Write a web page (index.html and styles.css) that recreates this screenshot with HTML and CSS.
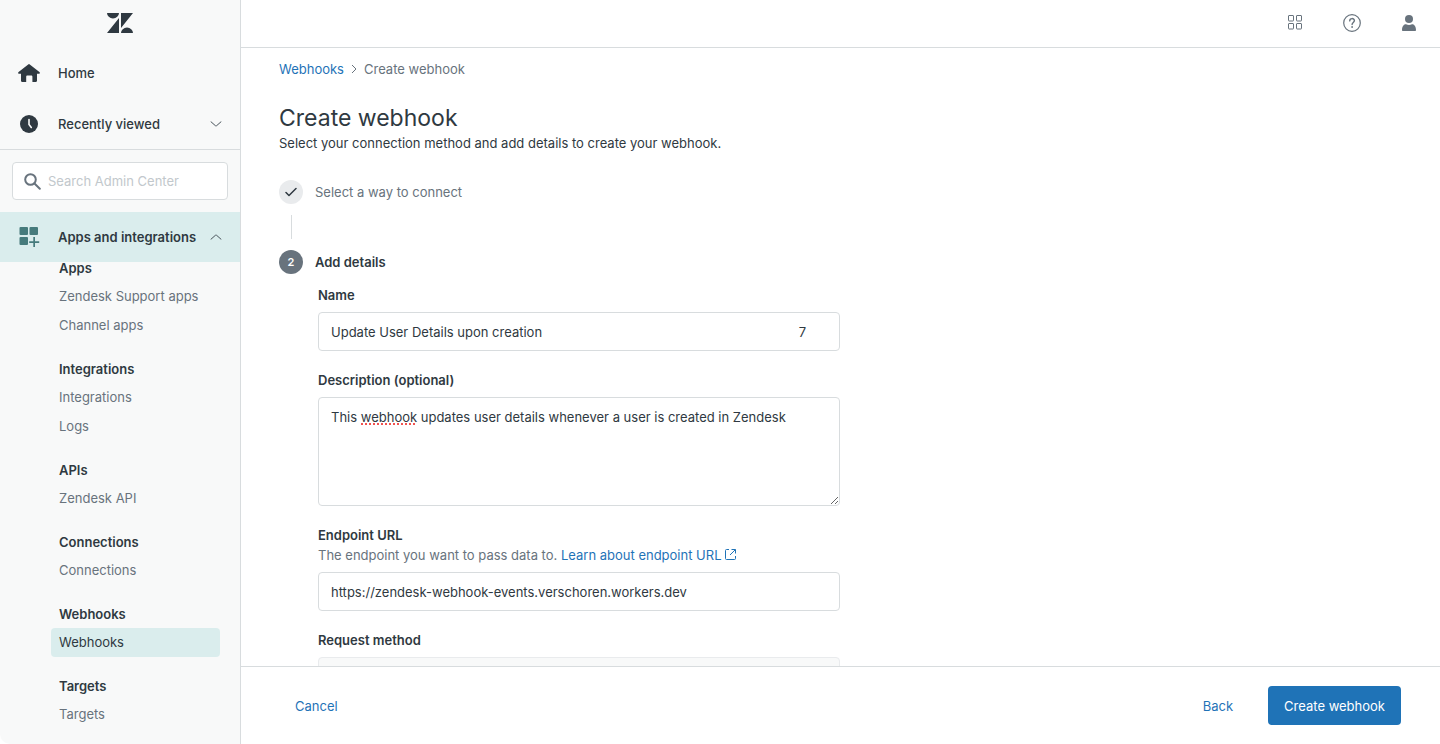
FILE: index.html
```html
<!DOCTYPE html>
<html lang="en">
<head>
    <meta charset="UTF-8">
    <meta name="viewport" content="width=device-width, initial-scale=1.0">
    <title>Create webhook</title>
    <link rel="stylesheet" href="styles.css">
</head>
<body>
    <div class="app">
        <aside class="sidebar">
            <div class="logo">
                <svg width="26" height="20" viewBox="0 0 26 20" fill="currentColor">
                    <path d="M0 0h12a6 5.4 0 0 1-12 0zM12 5v15H0zM14 0h12L14 15zM14 20a6 5.4 0 0 1 12 0z"/>
                </svg>
            </div>
            <a class="side-row" href="#">
                <svg class="side-icon" width="22" height="18" viewBox="0 0 22 18" fill="currentColor">
                    <path d="M10.2.4a1.2 1.2 0 0 1 1.6 0l9.6 7.7c.9.8.5 1.7-.6 1.7H19v7c0 .7-.4 1.1-1.1 1.1h-3.5v-5.2c0-.8-.5-1.3-1.3-1.3H9.5c-.8 0-1.3.5-1.3 1.3v5.2H4.1c-.7 0-1.1-.4-1.1-1.1v-7H1.2C.1 9.8-.3 8.9.6 8.1z"/>
                </svg>
                <span>Home</span>
            </a>
            <button class="side-row" type="button">
                <svg class="side-icon" width="18" height="18" viewBox="0 0 18 18">
                    <circle cx="9" cy="9" r="9" fill="currentColor"/>
                    <path d="M9 4.5v5l2.3 3" fill="none" stroke="#f8f9f9" stroke-width="1.6" stroke-linecap="round"/>
                </svg>
                <span>Recently viewed</span>
                <svg class="chevron" width="12" height="6" viewBox="0 0 12 6"><path d="M1 .8l4.4 3.9q.6.5 1.2 0L11 .8"/></svg>
            </button>
            <div class="search">
                <svg width="17" height="17" viewBox="0 0 17 17" fill="none" stroke="currentColor" stroke-width="2" stroke-linecap="round">
                    <circle cx="6.5" cy="6.5" r="5.3"/>
                    <path d="M10.5 10.5l5.3 5.3"/>
                </svg>
                <input type="text" placeholder="Search Admin Center" aria-label="Search Admin Center">
            </div>
            <button class="side-row active" type="button">
                <svg class="side-icon" width="20" height="20" viewBox="0 0 20 20" fill="currentColor">
                    <rect x=".5" width="8.5" height="8" rx="1"/>
                    <rect x="10.5" width="8.5" height="8" rx="1"/>
                    <rect x=".5" y="10" width="8.5" height="8" rx="1"/>
                    <path d="M14.300 10H16v4.200h4.200v1.700H16V20h-1.700v-4.100h-4.100v-1.700h4.100z"/>
                </svg>
                <span>Apps and integrations</span>
                <svg class="chevron" width="12" height="6" viewBox="0 0 12 6"><path d="M1 5.200l4.400-3.900q.6-.5 1.200 0L11 5.200"/></svg>
            </button>
            <nav class="side-nav">
                <section>
                    <h2>Apps</h2>
                    <a href="#">Zendesk Support apps</a>
                    <a href="#">Channel apps</a>
                </section>
                <section>
                    <h2>Integrations</h2>
                    <a href="#">Integrations</a>
                    <a href="#">Logs</a>
                </section>
                <section>
                    <h2>APIs</h2>
                    <a href="#">Zendesk API</a>
                </section>
                <section>
                    <h2>Connections</h2>
                    <a href="#">Connections</a>
                </section>
                <section>
                    <h2>Webhooks</h2>
                    <a class="current" href="#">Webhooks</a>
                </section>
                <section>
                    <h2>Targets</h2>
                    <a href="#">Targets</a>
                </section>
            </nav>
        </aside>

        <div class="main">
            <header class="topbar">
                <button type="button" aria-label="Products">
                    <svg width="14" height="15" viewBox="0 0 14 15" fill="none" stroke="currentColor">
                        <rect x=".5" y=".5" width="5" height="5.5" rx=".5"/>
                        <rect x="8.5" y=".5" width="5" height="5.5" rx=".5"/>
                        <rect x=".5" y="8.5" width="5" height="5.5" rx=".5"/>
                        <rect x="8.5" y="8.5" width="5" height="5.5" rx=".5"/>
                    </svg>
                </button>
                <button type="button" aria-label="Help">
                    <svg width="18" height="18" viewBox="0 0 18 18" fill="none" stroke="currentColor">
                        <circle cx="9" cy="9" r="8.3" stroke-width="1.2"/>
                        <path d="M6.7 6.9c0-3.1 4.7-3 4.7-.3 0 1.900-2.300 1.800-2.300 4" stroke-width="1.4" stroke-linecap="round"/>
                        <circle cx="9.1" cy="13" r=".9" fill="currentColor" stroke="none"/>
                    </svg>
                </button>
                <button type="button" aria-label="Profile">
                    <svg width="14" height="16" viewBox="0 0 14 16" fill="currentColor">
                        <circle cx="7" cy="4" r="4"/>
                        <path d="M0 15c0-3.800 2-5.800 4-5.800q3 1.400 6 0c2 0 4 2 4 5.800 0 .6-.4 1-1 1H1c-.6 0-1-.4-1-1z"/>
                    </svg>
                </button>
            </header>

            <main class="content">
                <div class="breadcrumb">
                    <a href="#">Webhooks</a>
                    <svg width="6" height="10" viewBox="0 0 6 10" fill="none" stroke="currentColor"><path d="M1 1l4 4-4 4"/></svg>
                    <span>Create webhook</span>
                </div>
                <h1>Create webhook</h1>
                <p class="lead">Select your connection method and add details to create your webhook.</p>

                <div class="step">
                    <span class="step-dot done">
                        <svg width="12" height="10" viewBox="0 0 12 10" fill="none" stroke="currentColor" stroke-width="1.5" stroke-linecap="round" stroke-linejoin="round"><path d="M1 5.500l3 3L11 1.500"/></svg>
                    </span>
                    <span>Select a way to connect</span>
                </div>
                <div class="step-line"></div>
                <div class="step current">
                    <span class="step-dot">2</span>
                    <span>Add details</span>
                </div>

                <form class="details" id="webhook-form">
                    <div class="field">
                        <label for="name">Name</label>
                        <div class="control">
                            <input type="text" id="name" value="Update User Details upon creation">
                            <span class="counter">7</span>
                        </div>
                    </div>
                    <div class="field">
                        <label for="description">Description (optional)</label>
                        <div class="control">
                            <textarea id="description" spellcheck="false">This webhook updates user details whenever a user is created in Zendesk</textarea>
                            <span class="spelling"></span>
                        </div>
                    </div>
                    <div class="field">
                        <label for="endpoint">Endpoint URL</label>
                        <p class="hint">The endpoint you want to pass data to.
                            <a href="#">Learn about endpoint URL
                                <svg width="11" height="11" viewBox="0 0 11 11" fill="none" stroke="currentColor"><path d="M4 .5H1.500a1 1 0 0 0-1 1v8a1 1 0 0 0 1 1h8a1 1 0 0 0 1-1V7M6.500.5h4v4M10.300.7L5 6"/></svg>
                            </a>
                        </p>
                        <div class="control">
                            <input type="text" id="endpoint" value="https://zendesk-webhook-events.verschoren.workers.dev">
                        </div>
                    </div>
                    <div class="field">
                        <label for="method">Request method</label>
                        <div class="control">
                            <select id="method" disabled></select>
                        </div>
                    </div>
                </form>
            </main>

            <footer class="actions">
                <button class="btn-link" type="button">Cancel</button>
                <div class="actions-right">
                    <button class="btn-link" type="button">Back</button>
                    <button class="btn-primary" type="submit" form="webhook-form">Create webhook</button>
                </div>
            </footer>
        </div>
    </div>
</body>
</html>
```
FILE: styles.css
```css
* {
    box-sizing: border-box;
}
body {
    margin: 0;
    background-color: #fff;
    color: #2f3941;
    font-family: Inter, "Liberation Sans", sans-serif;
    font-size: 13px;
    line-height: 20px;
}
h1, h2, p {
    margin: 0;
}
a {
    color: #1f73b7;
    text-decoration: none;
}
button, input, textarea, select {
    font: inherit;
    color: inherit;
}
button {
    border: none;
    background: none;
    padding: 0;
    cursor: pointer;
}
svg {
    display: block;
    flex-shrink: 0;
}
.app {
    display: flex;
    height: 100vh;
}

/* Sidebar */
.sidebar {
    display: flex;
    flex-direction: column;
    flex: 0 0 241px;
    overflow: hidden;
    background-color: #f8f9f9;
    border-right: 1px solid #d8dcde;
    border-bottom-left-radius: 10px;
}
.logo {
    display: flex;
    justify-content: center;
    padding: 13px 0 14px;
}
.side-row {
    display: flex;
    align-items: center;
    flex-shrink: 0;
    height: 51px;
    padding-right: 18px;
    color: #2f3941;
    font-weight: 500;
    text-align: left;
}
.side-icon {
    width: 58px;
}
.side-row span {
    flex: 1;
    white-space: nowrap;
}
.side-row.active {
    height: 50px;
    background-color: #daeded;
    font-weight: 600;
}
.side-row.active .side-icon {
    color: #467b7c;
}
.chevron {
    fill: none;
    stroke: #49545c;
    stroke-linecap: round;
}
.search {
    position: relative;
    padding: 12px;
    border-top: 1px solid #d8dcde;
    color: #68737d;
}
.search svg {
    position: absolute;
    left: 24px;
    top: 23px;
}
.search input {
    display: block;
    width: 100%;
    height: 38px;
    padding: 0 12px 0 35px;
    border: 1px solid #d8dcde;
    border-radius: 4px;
    background-color: #fff;
}
.search input::placeholder {
    color: #c2c8cc;
}
.side-nav {
    display: flex;
    flex-direction: column;
    gap: 23px;
    padding: 0 20px 0 51px;
}
.side-nav h2 {
    margin-bottom: 8px;
    padding: 0 8px;
    font-size: 13px;
    font-weight: 600;
    line-height: 12px;
}
.side-nav a {
    display: block;
    padding: 0 8px;
    border-radius: 4px;
    color: #68737d;
    line-height: 29px;
}
.side-nav a.current {
    background-color: #daeded;
    color: #2f3941;
}

/* Main column */
.main {
    display: flex;
    flex-direction: column;
    flex: 1;
    min-width: 0;
}
.topbar {
    display: flex;
    justify-content: flex-end;
    align-items: center;
    gap: 39px;
    flex-shrink: 0;
    height: 48px;
    padding: 0 22px 2px;
    border-bottom: 1px solid #d8dcde;
    color: #68737d;
}
.topbar button {
    display: flex;
    justify-content: center;
    width: 18px;
}
.content {
    flex: 1;
    min-height: 0;
    padding: 11px 38px 20px;
    overflow-y: auto;
    scrollbar-width: none;
}
.breadcrumb {
    display: flex;
    align-items: center;
    gap: 7px;
    color: #68737d;
}
h1 {
    margin-top: 25px;
    font-size: 23px;
    font-weight: 400;
    line-height: 29px;
}
.lead {
    margin-bottom: 27px;
}
.step {
    display: flex;
    align-items: center;
    gap: 12px;
    color: #68737d;
}
.step.current {
    color: #2f3941;
    font-weight: 600;
}
.step-dot {
    display: flex;
    justify-content: center;
    align-items: center;
    width: 24px;
    height: 24px;
    border-radius: 50%;
    background-color: #68737d;
    color: #fff;
    font-size: 11px;
}
.step-dot.done {
    background-color: #e9ebed;
    color: #2f3941;
}
.step-line {
    width: 1px;
    height: 24px;
    margin: 11px 12px;
    background-color: #d8dcde;
}
.details {
    display: flex;
    flex-direction: column;
    gap: 19px;
    max-width: 561px;
    margin-top: 11px;
    padding-left: 39px;
}
.field label {
    display: block;
    font-weight: 600;
}
.hint {
    color: #68737d;
}
.hint svg {
    display: inline;
}
.control {
    position: relative;
    margin-top: 7px;
}
.control input, .control textarea, .control select {
    display: block;
    width: 100%;
    height: 39px;
    padding: 0 12px;
    border: 1px solid #d8dcde;
    border-radius: 4px;
    background-color: #fff;
}
.control textarea {
    height: 109px;
    padding: 9px 12px;
    resize: vertical;
}
.control select {
    appearance: none;
    background-color: #f8f9f9;
    border-color: #e9ebed;
    opacity: 1;
}
.counter {
    position: absolute;
    top: 10px;
    right: 34px;
}
.spelling {
    position: absolute;
    top: 26px;
    left: 43px;
    width: 54px;
    border-bottom: 2px dotted #f0524f;
}

/* Footer */
.actions {
    display: flex;
    justify-content: space-between;
    align-items: center;
    flex-shrink: 0;
    height: 78px;
    padding: 0 39px 0 54px;
    border-top: 1px solid #d8dcde;
}
.actions-right {
    display: flex;
    align-items: center;
    gap: 35px;
}
.btn-link {
    color: #1f73b7;
}
.btn-primary {
    height: 39px;
    padding: 0 16px;
    border-radius: 4px;
    background-color: #1f73b7;
    color: #fff;
}
```
